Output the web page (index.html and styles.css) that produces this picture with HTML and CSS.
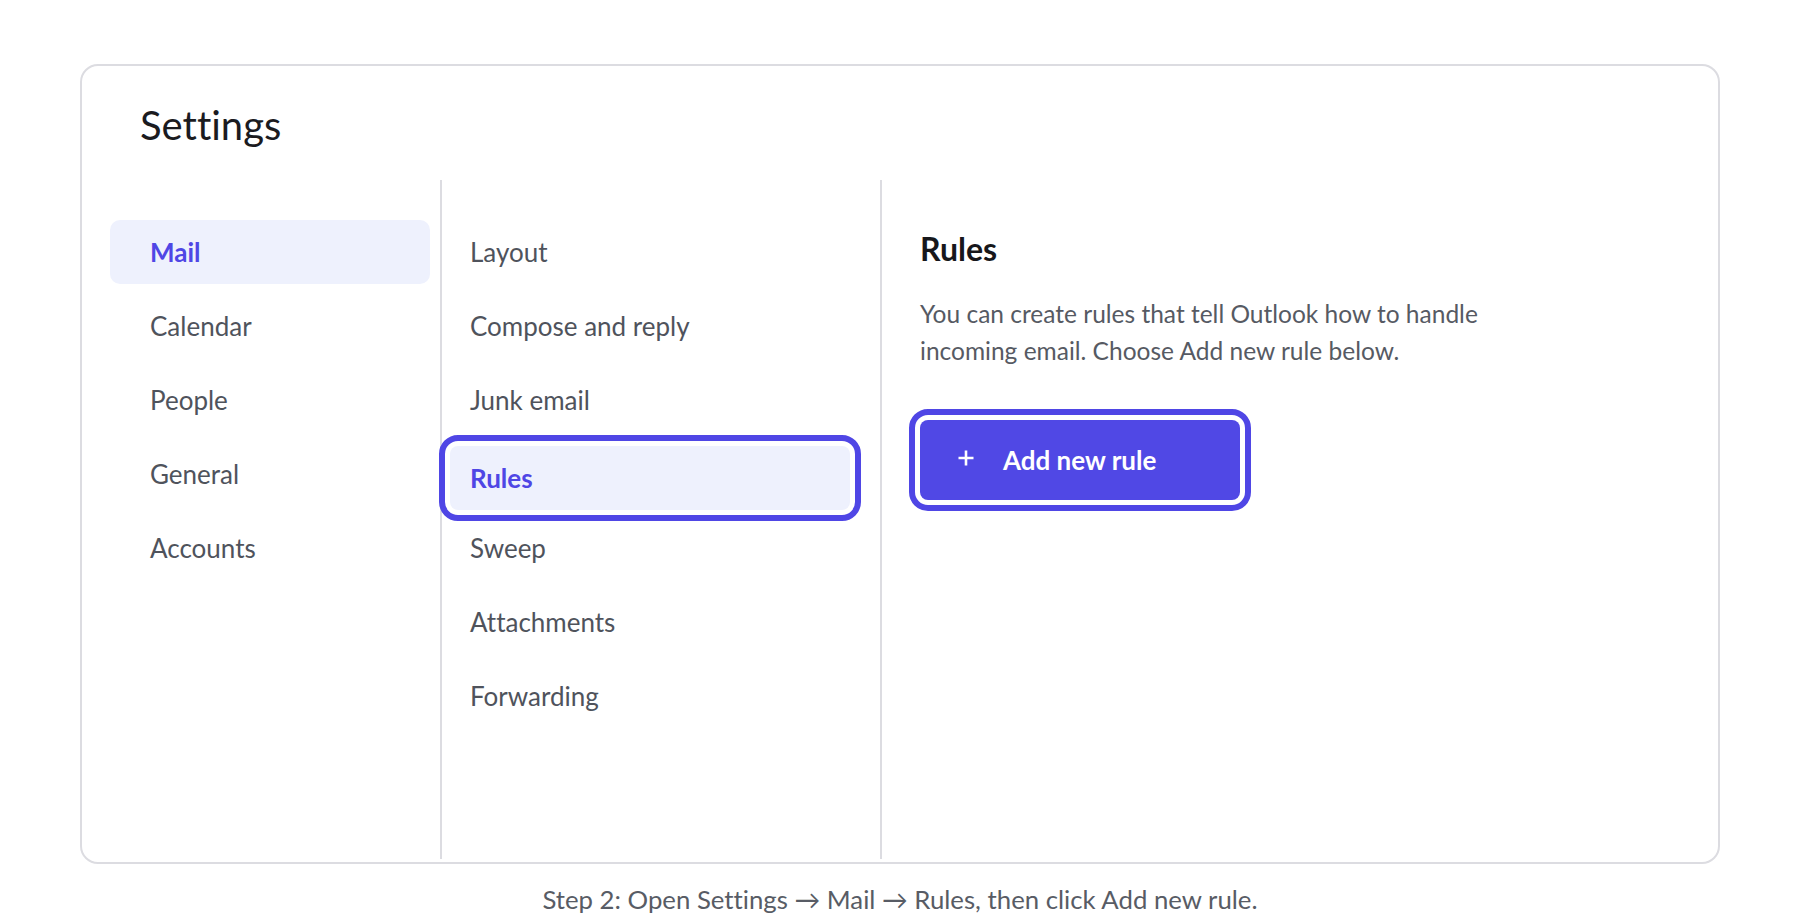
FILE: index.html
```html
<!DOCTYPE html>
<html lang="en">
<head>
<meta charset="utf-8">
<title>Settings</title>
<link rel="stylesheet" href="styles.css">
</head>
<body>
<div class="card">
  <h1 class="title">Settings</h1>
  <div class="columns">
    <nav class="col col-main">
      <div class="nav-item active">Mail</div>
      <div class="nav-item">Calendar</div>
      <div class="nav-item">People</div>
      <div class="nav-item">General</div>
      <div class="nav-item">Accounts</div>
    </nav>
    <nav class="col col-sub">
      <div class="sub-item">Layout</div>
      <div class="sub-item">Compose and reply</div>
      <div class="sub-item">Junk email</div>
      <div class="sub-item active focused">Rules</div>
      <div class="sub-item">Sweep</div>
      <div class="sub-item">Attachments</div>
      <div class="sub-item">Forwarding</div>
    </nav>
    <section class="col col-detail">
      <h2 class="detail-title">Rules</h2>
      <p class="detail-text">You can create rules that tell Outlook how to handle<br>incoming email. Choose Add new rule below.</p>
      <button class="add-btn" type="button">
        <svg class="plus" width="18" height="18" viewBox="0 0 18 18" aria-hidden="true">
          <path d="M9 1.5V16.5M1.5 9H16.5" stroke="#ffffff" stroke-width="2.6" stroke-linecap="butt" fill="none"/>
        </svg>
        <span>Add new rule</span>
      </button>
    </section>
  </div>
</div>
<p class="caption">Step 2: Open Settings → Mail → Rules, then click Add new rule.</p>
</body>
</html>
```
FILE: styles.css
```css
* {
  box-sizing: border-box;
}

html, body {
  margin: 0;
  padding: 0;
  background: #ffffff;
}

body {
  font-family: Lato, "Open Sans", "Liberation Sans", sans-serif;
  font-variant-ligatures: none;
  color: #4b4f58;
}

.card {
  margin: 64px 80px 0;
  height: 800px;
  border: 2px solid #dcdce1;
  border-radius: 18px;
  background: #ffffff;
  display: flex;
  flex-direction: column;
  padding: 35px 0 3px 0;
}

.title {
  margin: 0 0 0 58px;
  font-size: 40px;
  line-height: 48px;
  font-weight: 400;
  color: #1b1b1f;
}

.columns {
  flex: 1;
  display: flex;
  margin-top: 31px;
}

.col {
  display: flex;
  flex-direction: column;
  padding-top: 40px;
}

.col-main {
  width: 358px;
  padding-left: 28px;
  gap: 10px;
}

.col-sub {
  width: 440px;
  border-left: 2px solid #dcdce1;
  padding-left: 8px;
  gap: 10px;
}

.col-detail {
  flex: 1;
  border-left: 2px solid #dcdce1;
  padding-left: 38px;
}

.nav-item,
.sub-item {
  height: 64px;
  line-height: 64px;
  font-size: 26px;
  color: #4f535c;
  border-radius: 10px;
}

.nav-item {
  width: 320px;
  padding-left: 40px;
}

.sub-item {
  width: 400px;
  padding-left: 20px;
}

.nav-item.active,
.sub-item.active {
  background: #eef1fd;
  color: #4f46e5;
  font-weight: 700;
}

.sub-item.focused {
  border-radius: 8px;
  outline: 6px solid #4f46e5;
  outline-offset: 5px;
  margin-top: 4px;
  margin-bottom: -4px;
}

.detail-title {
  margin: 10px 0 0;
  font-size: 32px;
  line-height: 1.2;
  font-weight: 700;
  color: #17171b;
}

.detail-text {
  margin: 28px 0 0;
  font-size: 24.5px;
  line-height: 36.5px;
  color: #565a63;
}

.add-btn {
  margin-top: 51px;
  width: 320px;
  height: 80px;
  display: flex;
  align-items: center;
  gap: 28px;
  padding: 0 0 0 37px;
  border: none;
  border-radius: 8px;
  background: #5048e5;
  color: #ffffff;
  font-family: Lato, "Open Sans", "Liberation Sans", sans-serif;
  font-size: 26px;
  font-weight: 700;
  outline: 6px solid #4f46e5;
  outline-offset: 5px;
  cursor: pointer;
}

.plus {
  flex: none;
  display: block;
  margin-bottom: 4px;
}

.caption {
  margin: 20px 0 0;
  text-align: center;
  font-size: 25.75px;
  line-height: 1.2;
  color: #585c65;
}
```
